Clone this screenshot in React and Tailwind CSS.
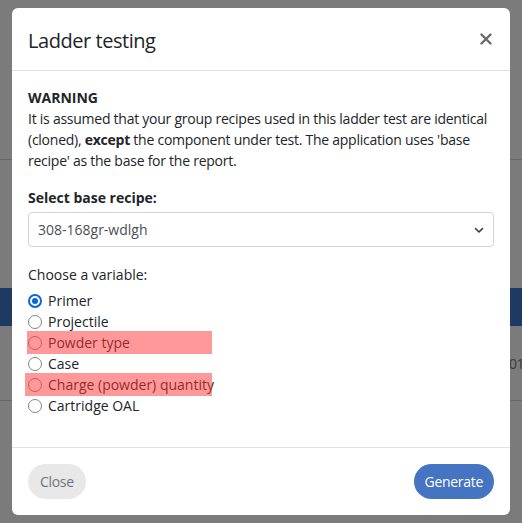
import React from "react";

function Radio({ checked }) {
  if (checked) {
    return (
      <span className="flex h-[14px] w-[14px] shrink-0 items-center justify-center rounded-full border-2 border-[#0a67d6] bg-white">
        <span className="h-[6px] w-[6px] rounded-full bg-[#0a67d6]" />
      </span>
    );
  }
  return <span className="h-[14px] w-[14px] shrink-0 rounded-full border-[1.5px] border-[#85858a] bg-white" />;
}

function Option({ label, checked, hl, hlLeft }) {
  return (
    <div className="relative flex h-[21px] items-center gap-[6px]">
      {hl && (
        <span
          className={
            "absolute top-[-1px] h-[23px] bg-[#ff3333]/50 " +
            (hlLeft ? "left-[-3px] w-[187px]" : "left-[-1px] w-[185px]")
          }
        />
      )}
      <Radio checked={checked} />
      <span className="text-[#212529]">{label}</span>
    </div>
  );
}

export default function App() {
  return (
    <div
      className="relative h-[523px] w-[522px] overflow-hidden bg-[#7b7b7b]"
      style={{ fontFamily: '"Open Sans", "Noto Sans", sans-serif' }}
    >
      {/* page behind the backdrop */}
      <div className="flex flex-col">
        <div className="h-[160px] border-b border-[#676767]" />
        <div className="h-[128px]" />
        <div className="h-[38px] bg-[#1f3a62]" />
        <div className="flex h-[74px] items-center justify-end">
          <span className="mr-[-2px] text-[14px] tracking-[-0.5px] text-[#3a3a3a]">01</span>
        </div>
        <div className="h-[1px] bg-[#676767]" />
      </div>

      {/* modal */}
      <div className="absolute left-[12px] top-[8px] flex w-[498px] flex-col rounded-[6px] bg-white text-[14px] leading-[21px] text-[#212529]">
        <div className="flex h-[63px] items-center justify-between border-b border-[#dee2e6] px-4">
          <h5 className="mt-[3px] text-[20px] leading-[24px] tracking-[-0.45px] text-[#212529]">Ladder testing</h5>
          <svg width="12" height="12" viewBox="0 0 12 12" className="mr-[2px] mt-[-1px]">
            <path d="M1.5 1.5 L10.5 10.5 M10.5 1.5 L1.5 10.5" stroke="#6a6a6a" strokeWidth="2.4" strokeLinecap="round" />
          </svg>
        </div>

        <div className="flex flex-col px-4 pb-[31px] pt-4">
          <p className="font-bold">WARNING</p>
          <p className="tracking-[-0.25px]">
            It is assumed that your group recipes used in this ladder test are identical
            <br />
            (cloned), <b>except</b> the component under test. The application uses 'base
            <br />
            recipe' as the base for the report.
          </p>

          <label className="mt-4 font-bold">Select base recipe:</label>
          <div className="mt-[4px] flex h-[35px] items-center justify-between rounded-[4px] border border-[#ced4da] pl-[9px] pr-[9px] text-[#495057]">
            <span>308-168gr-wdlgh</span>
            <svg width="10" height="8" viewBox="0 0 10 8">
              <path d="M1.5 2.5 L5 6 L8.5 2.5" stroke="#343a40" strokeWidth="1.6" fill="none" strokeLinecap="round" strokeLinejoin="round" />
            </svg>
          </div>

          <p className="mt-[17px]">Choose a variable:</p>
          <div className="mt-[5px] flex flex-col">
            <Option label="Primer" checked />
            <Option label="Projectile" />
            <Option label="Powder type" hl />
            <Option label="Case" />
            <Option label="Charge (powder) quantity" hl hlLeft />
            <Option label="Cartridge OAL" />
          </div>
        </div>

        <div className="flex items-center justify-between border-t border-[#dee2e6] p-4">
          <button className="h-[35px] rounded-full bg-[#e8e8e8] px-[12px] text-[14px] tracking-[-0.3px] text-[#6c757d]">Close</button>
          <button className="h-[35px] rounded-full bg-[#4574c2] px-[11px] text-[14px] tracking-[-0.3px] text-white">Generate</button>
        </div>
      </div>
    </div>
  );
}
